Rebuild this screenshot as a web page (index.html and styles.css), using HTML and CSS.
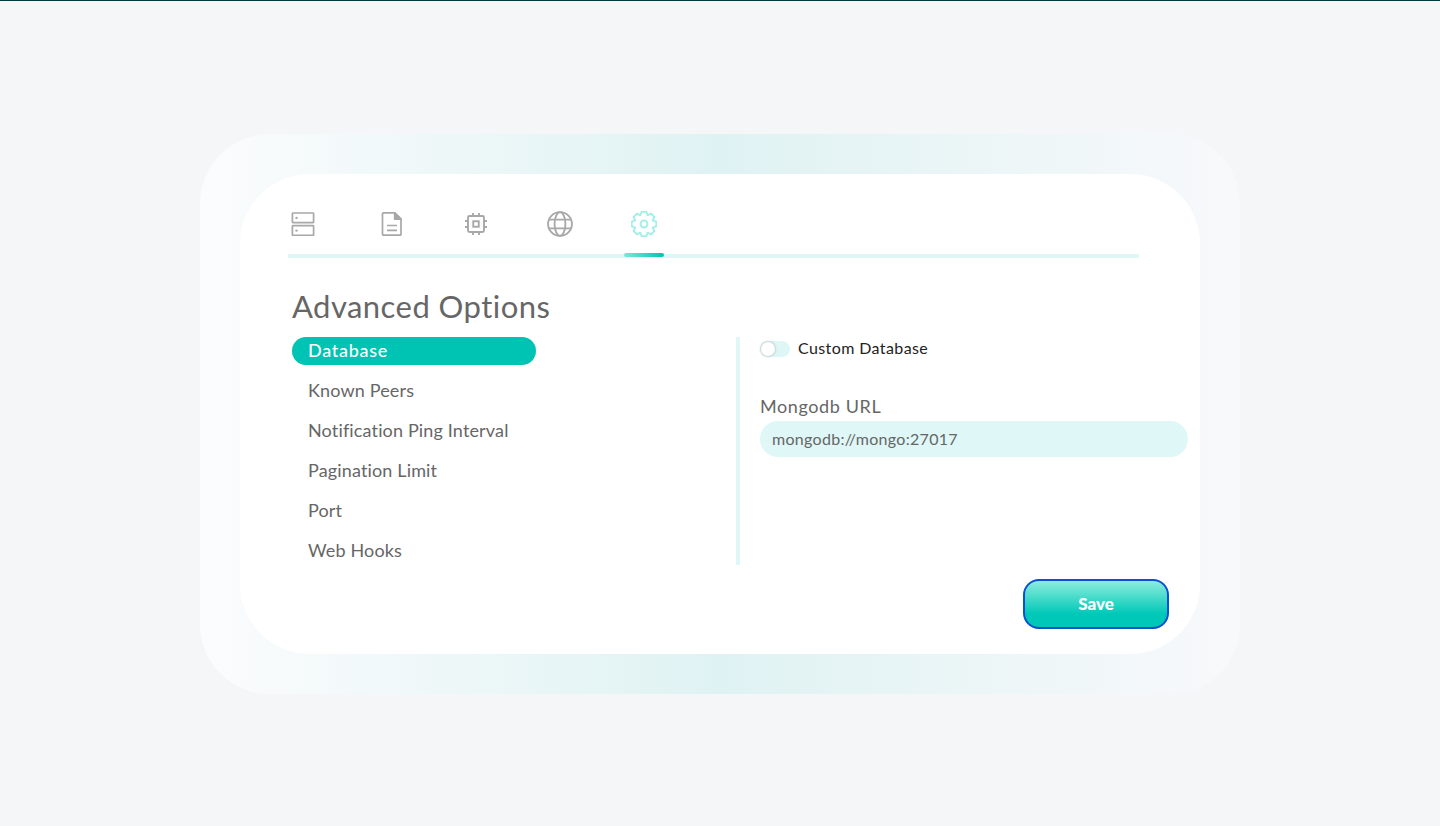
FILE: index.html
```html
<!DOCTYPE html>
<html>
<head>
  <title>Advanced Options</title>
  <link rel="stylesheet" href="styles.css">
</head>
<body>
  <div class="topline"></div>
  <main class="page">
    <div class="glow">
      <section class="card">
        <nav class="tabs">
          <a class="tab">
            <svg viewBox="0 0 24 24" width="24" height="24" fill="none" stroke="currentColor" stroke-width="1.7">
              <rect x="1.400" y="1" width="21.200" height="9.700" rx="0.600"/>
              <rect x="1.400" y="13.700" width="21.200" height="9.700" rx="0.600"/>
              <circle cx="5.500" cy="5.900" r="1.200" fill="currentColor" stroke="none"/>
              <circle cx="5.500" cy="18.600" r="1.200" fill="currentColor" stroke="none"/>
            </svg>
          </a>
          <a class="tab">
            <svg viewBox="0 0 24 24" width="24" height="24" fill="none" stroke="currentColor" stroke-width="1.7" stroke-linejoin="round">
              <path d="M3.500 0.900h11.200l6.300 6.300v15a1 1 0 0 1-1 1h-16.500a1 1 0 0 1-1-1v-20.300a1 1 0 0 1 1-1z"/>
              <path d="M14.700 0.900v6.300h6.300z" fill="currentColor"/>
              <path d="M7 13.500h10M7 18.400h10"/>
            </svg>
          </a>
          <a class="tab">
            <svg viewBox="0 0 24 24" width="24" height="24" fill="none" stroke="currentColor" stroke-width="1.900">
              <rect x="4" y="4" width="16" height="16" rx="1.500"/>
              <rect x="9.250" y="9.250" width="5.500" height="5.500"/>
              <path d="M9 1v3M15 1v3M9 20v3M15 20v3M1 9h3M1 15h3M20 9h3M20 15h3"/>
            </svg>
          </a>
          <a class="tab">
            <svg viewBox="0 0 24 24" width="26" height="26" fill="none" stroke="currentColor" stroke-width="1.700">
              <circle cx="12" cy="12" r="11"/>
              <ellipse cx="12" cy="12" rx="5" ry="11"/>
              <path d="M2 8h20M2 16h20"/>
            </svg>
          </a>
          <a class="tab tab-active">
            <svg viewBox="0 0 24 24" width="26" height="26" fill="none" stroke="currentColor" stroke-width="1.800" stroke-linejoin="round">
              <circle cx="12" cy="12" r="3.200"/>
              <polygon transform="translate(12 12)" points="-3.200,-8.300 -2.200,-11.300 2.200,-11.300 3.200,-8.300 3.610,-8.130 6.430,-9.550 9.550,-6.430 8.130,-3.610 8.300,-3.200 11.300,-2.200 11.300,2.200 8.300,3.200 8.130,3.610 9.550,6.430 6.430,9.550 3.610,8.130 3.200,8.300 2.200,11.300 -2.200,11.300 -3.200,8.300 -3.610,8.130 -6.430,9.550 -9.550,6.430 -8.130,3.610 -8.300,3.200 -11.300,2.200 -11.300,-2.200 -8.300,-3.200 -8.130,-3.610 -9.550,-6.430 -6.430,-9.550 -3.610,-8.130"/>
            </svg>
          </a>
        </nav>
        <div class="tab-rule"><span class="tab-marker"></span></div>

        <h1 class="title">Advanced Options</h1>

        <div class="columns">
          <ul class="menu">
            <li class="menu-item menu-item-active">Database</li>
            <li class="menu-item">Known Peers</li>
            <li class="menu-item">Notification Ping Interval</li>
            <li class="menu-item">Pagination Limit</li>
            <li class="menu-item">Port</li>
            <li class="menu-item">Web Hooks</li>
          </ul>
          <div class="panel">
            <div class="switch-row">
              <span class="switch"><span class="knob"></span></span>
              <span class="switch-label">Custom Database</span>
            </div>
            <label class="field-label">Mongodb URL</label>
            <div class="field">mongodb://mongo:27017</div>
          </div>
        </div>

        <div class="actions">
          <button class="save">Save</button>
        </div>
      </section>
    </div>
  </main>
</body>
</html>
```

FILE: styles.css
```css
* {
  box-sizing: border-box;
}

html,
body {
  height: 100%;
}

body {
  margin: 0;
  display: flex;
  flex-direction: column;
  background-color: #f4f6f8;
  font-family: Lato, "Open Sans", sans-serif;
}

.topline {
  height: 1px;
  background-color: #01393f;
}

.page {
  flex: 1;
  display: flex;
  justify-content: center;
  align-items: center;
}

.glow {
  width: 1040px;
  height: 560px;
  padding: 40px;
  border-radius: 70px;
  background: linear-gradient(90deg, #fbfcfd 0%, #dff2f3 50%, #f8f9fb 100%);
}

.card {
  height: 480px;
  padding: 28px 12px 0 48px;
  border-radius: 70px;
  background-color: #ffffff;
}

.tabs {
  display: flex;
  width: 851px;
  height: 52px;
}

.tab {
  width: 84px;
  height: 44px;
  display: flex;
  justify-content: center;
  align-items: center;
  color: #a8a8a8;
}

.tab:first-child {
  width: 30px;
  margin-right: 32px;
}

.tab-active {
  color: #a5efe8;
}

.tab-rule {
  position: relative;
  width: 851px;
  height: 4px;
  background-color: #dff7f7;
}

.tab-marker {
  position: absolute;
  left: 336px;
  top: -1px;
  width: 40px;
  height: 4px;
  border-radius: 2px;
  background: linear-gradient(90deg, #7fe6d6, #00c4b3);
}

.title {
  margin: 30px 0 13px 4px;
  font-size: 31px;
  line-height: 36px;
  font-weight: 400;
  letter-spacing: 0.45px;
  color: #666666;
}

.columns {
  display: flex;
  height: 228px;
}

.menu {
  width: 448px;
  margin: 0;
  padding: 0 0 0 4px;
  list-style: none;
}

.menu-item {
  width: 244px;
  height: 28px;
  margin-bottom: 12px;
  padding-left: 16px;
  border-radius: 14px;
  font-size: 18px;
  letter-spacing: 0.15px;
  line-height: 26px;
  color: #666666;
}

.menu-item-active {
  background-color: #00c4b3;
  color: #ffffff;
  font-weight: 500;
  letter-spacing: 0.7px;
}

.panel {
  width: 452px;
  border-left: 4px solid #dff7f7;
  padding-left: 20px;
}

.switch-row {
  display: flex;
  align-items: center;
  gap: 8px;
  height: 22px;
}

.switch {
  position: relative;
  width: 30px;
  height: 16px;
  margin-top: 2px;
  border-radius: 8px;
  background-color: #dff6f7;
}

.knob {
  position: absolute;
  left: 1px;
  top: 1px;
  width: 14px;
  height: 14px;
  border-radius: 50%;
  background-color: #ffffff;
  box-shadow: 0 0 3px rgba(0, 0, 0, 0.3);
}

.switch-label {
  font-size: 16px;
  letter-spacing: 0.4px;
  color: #222222;
}

.field-label {
  display: block;
  margin-top: 35px;
  margin-bottom: 3px;
  font-size: 18px;
  letter-spacing: 0.6px;
  line-height: 24px;
  color: #666666;
}

.field {
  width: 428px;
  height: 36px;
  padding-left: 12px;
  border-radius: 18px;
  background-color: #dff7f7;
  font-size: 16px;
  letter-spacing: 0.3px;
  line-height: 36px;
  color: #666666;
}

.actions {
  display: flex;
  justify-content: flex-end;
  margin-top: 14px;
  padding-right: 19px;
}

.save {
  width: 146px;
  height: 50px;
  padding-bottom: 2px;
  border: 2px solid #0b4fd6;
  border-radius: 16px;
  background: linear-gradient(180deg, #8deddc 0%, #00c8b8 72%);
  color: #ffffff;
  font-family: inherit;
  font-size: 17px;
  font-weight: 900;
}
```
